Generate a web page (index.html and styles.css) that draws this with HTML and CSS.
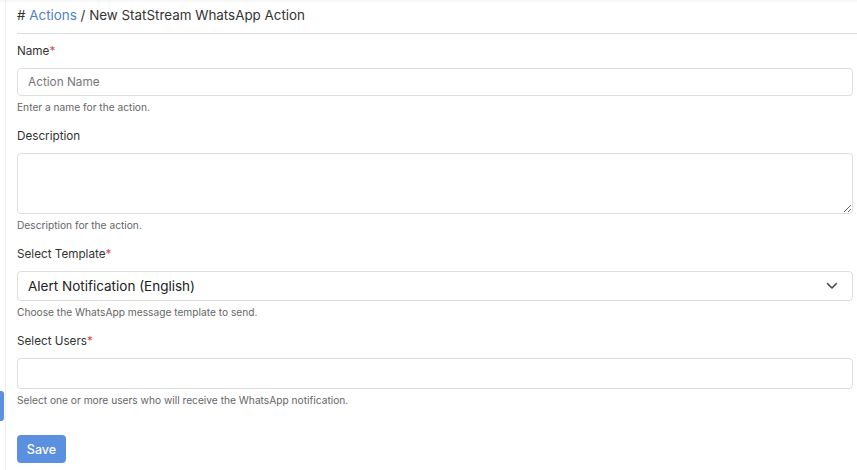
FILE: index.html
```html
<!DOCTYPE html>
<html>
<head>
<meta charset="utf-8">
<link rel="stylesheet" href="styles.css">
</head>
<body>
<div class="shell">
  <div class="rail"><span class="tab"></span></div>
  <main class="content">
    <div class="crumbs"># <a class="crumb-link">Actions</a> / New StatStream WhatsApp Action</div>
    <form class="form">
      <div class="field">
        <label class="label">Name<span class="req">*</span></label>
        <input class="input" type="text" placeholder="Action Name">
        <div class="help">Enter a name for the action.</div>
      </div>
      <div class="field">
        <label class="label">Description</label>
        <textarea class="textarea"></textarea>
        <div class="help">Description for the action.</div>
      </div>
      <div class="field">
        <label class="label">Select Template<span class="req">*</span></label>
        <div class="select">
          <span>Alert Notification (English)</span>
          <svg class="chev" width="12" height="8" viewBox="0 0 12 8"><path d="M1.5 1.5 L6 6 L10.5 1.5" fill="none" stroke="#444" stroke-width="1.5" stroke-linecap="round" stroke-linejoin="round"/></svg>
        </div>
        <div class="help">Choose the WhatsApp message template to send.</div>
      </div>
      <div class="field">
        <label class="label">Select Users<span class="req">*</span></label>
        <div class="multi"></div>
        <div class="help">Select one or more users who will receive the WhatsApp notification.</div>
      </div>
      <div class="actions">
        <button class="btn" type="button">Save</button>
      </div>
    </form>
  </main>
</div>
</body>
</html>
```

FILE: styles.css
```css
* { box-sizing: border-box; }
html, body { margin: 0; padding: 0; background: #fff; }
body {
  font-family: Inter, "Noto Sans", sans-serif;
  color: #333;
  width: 857px;
  height: 470px;
  overflow: hidden;
}
.shell {
  display: flex;
  min-height: 470px;
  box-shadow: inset 0 3px 3px -2px rgba(0,0,0,0.06);
}
.rail {
  width: 6px;
  border-right: 1px solid #ececec;
  position: relative;
  flex: none;
}
.tab {
  position: absolute;
  left: 0;
  top: 391px;
  width: 4px;
  height: 30px;
  background: #5b8fe0;
  border-radius: 0 3px 3px 0;
}
.content {
  flex: 1;
  padding-left: 11px;
}
.crumbs {
  font-size: 13.4px;
  color: #333;
  height: 34px;
  padding-top: 7px;
  border-bottom: 1px solid #dcdcdc;
}
.crumb-link { color: #4f7fd0; }
.form { padding-right: 4px; padding-top: 9px; }
.field { display: flex; flex-direction: column; }
.label {
  font-size: 11.7px;
  color: #333;
  line-height: 16px;
  margin-bottom: 9px;
}
.req { color: #e04848; }
.input, .multi {
  height: 28px;
  border: 1px solid #dedede;
  border-radius: 4px;
  padding: 0 10px;
  font-family: inherit;
  font-size: 11.8px;
  color: #333;
  outline: none;
}
.input::placeholder { color: #777; }
.multi { height: 31px; }
.textarea {
  height: 61px;
  border: 1px solid #dedede;
  border-radius: 4px;
  resize: vertical;
  font-family: inherit;
  outline: none;
  display: block;
}
.select {
  height: 30px;
  border: 1px solid #dedede;
  border-radius: 4px;
  padding: 0 14px 0 10px;
  display: flex;
  align-items: center;
  justify-content: space-between;
  font-size: 13.5px;
  color: #222;
}
.help {
  font-size: 10.2px;
  color: #666;
  line-height: 14px;
  margin-top: 4px;
  margin-bottom: 14px;
}
.actions { padding-top: 14px; }
.btn {
  background: #5b8fe0;
  color: #fff;
  border: none;
  border-radius: 4px;
  width: 49px;
  height: 28px;
  font-family: inherit;
  font-size: 12.5px;
  font-weight: 500;
  padding: 0;
}
```
